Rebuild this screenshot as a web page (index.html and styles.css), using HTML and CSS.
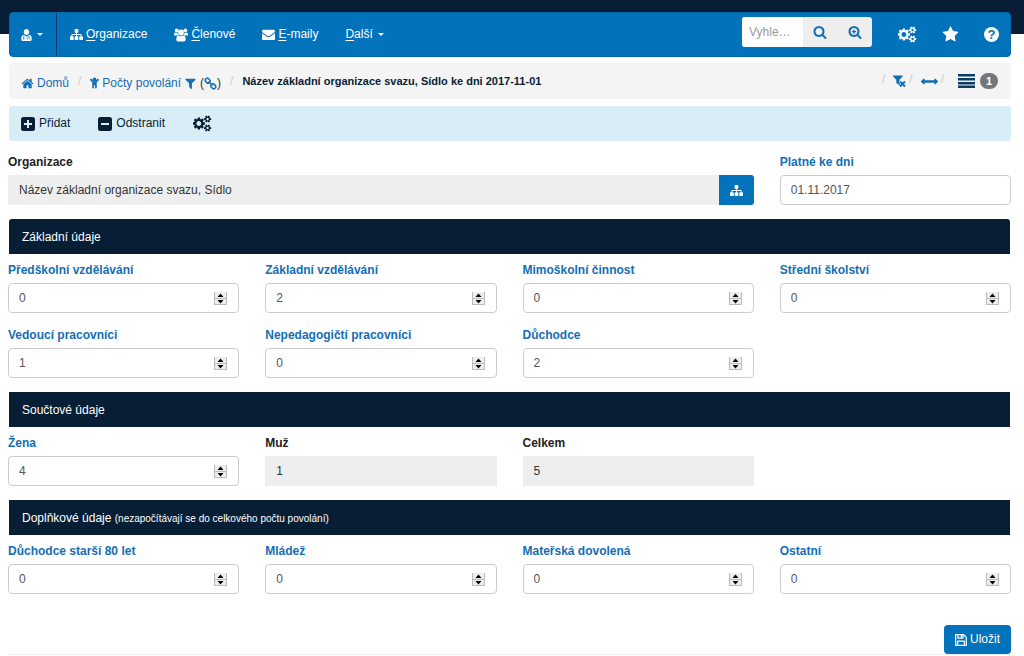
FILE: index.html
```html
<!DOCTYPE html>
<html lang="cs">
<head>
<meta charset="utf-8">
<meta name="viewport" content="width=device-width, initial-scale=1">
<title>Počty povolání</title>
<link rel="stylesheet" href="styles.css">
</head>
<body>
<svg class="sprite" aria-hidden="true">
  <symbol id="i-sitemap" viewBox="0 0 1792 1792"><path d="M1792 1248v320q0 40-28 68t-68 28h-320q-40 0-68-28t-28-68v-320q0-40 28-68t68-28h96v-192h-512v192h96q40 0 68 28t28 68v320q0 40-28 68t-68 28h-320q-40 0-68-28t-28-68v-320q0-40 28-68t68-28h96v-192h-512v192h96q40 0 68 28t28 68v320q0 40-28 68t-68 28h-320q-40 0-68-28t-28-68v-320q0-40 28-68t68-28h96v-192q0-52 38-90t90-38h512v-192h-96q-40 0-68-28t-28-68v-320q0-40 28-68t68-28h320q40 0 68 28t28 68v320q0 40-28 68t-68 28h-96v192h512q52 0 90 38t38 90v192h96q40 0 68 28t28 68z"/></symbol>
  <symbol id="i-home" viewBox="0 0 1792 1792"><path d="M1472 992v480q0 26-19 45t-45 19h-384v-384h-256v384h-384q-26 0-45-19t-19-45v-480q0-1 .5-3t.5-3l575-474 575 474q1 2 1 6zm223-69l-62 74q-8 9-21 11h-3q-13 0-21-7l-692-577-692 577q-12 8-24 7-13-2-21-11l-62-74q-8-10-7-23.500t11-21.500l719-599q32-26 76-26t76 26l244 204v-195q0-14 9-23t23-9h192q14 0 23 9t9 23v408l219 182q10 8 11 21.500t-7 23.500z"/></symbol>
  <symbol id="i-envelope" viewBox="0 0 1792 1792"><path d="M1792 710v794q0 66-47 113t-113 47h-1472q-66 0-113-47t-47-113v-794q44 49 101 87 362 246 497 345 57 42 92.500 65.500t94.500 48 110 24.500h2q51 0 110-24.500t94.500-48 92.500-65.500q170-123 498-345 57-39 100-87zm0-294q0 79-49 151t-122 123q-376 261-468 325-10 7-42.500 31t-54 38.500-52 32.500-57.500 27-50 9h-2q-23 0-50-9t-57.500-27-52-32.500-54-38.500-42.500-31q-91-64-262-182.500t-205-142.500q-62-42-117-115.500t-55-136.500q0-78 41.500-130t118.500-52h1472q65 0 112.500 47t47.500 113z"/></symbol>
  <symbol id="i-search" viewBox="0 0 1792 1792"><path d="M1216 832q0-185-131.500-316.500t-316.500-131.500-316.500 131.500-131.500 316.500 131.500 316.500 316.500 131.500 316.500-131.500 131.500-316.500zm512 832q0 52-38 90t-90 38q-54 0-90-38l-343-342q-179 124-399 124-143 0-273.500-55.500t-225-150-150-225-55.500-273.500 55.500-273.500 150-225 225-150 273.500-55.500 273.500 55.500 225 150 150 225 55.500 273.500q0 220-124 399l343 343q37 37 37 90z"/></symbol>
  <symbol id="i-search-plus" viewBox="0 0 1792 1792"><use href="#i-search"/><path d="M688 560h160v192h192v160h-192v192h-160v-192h-192v-160h192z"/></symbol>
  <symbol id="i-star" viewBox="0 0 1792 1792"><path d="M1728 647q0 22-26 48l-363 354 86 500q1 7 1 20 0 21-10.500 35.500t-30.500 14.500q-19 0-40-12l-449-236-449 236q-22 12-40 12-21 0-31.500-14.500t-10.500-35.500q0-6 2-20l86-500-364-354q-25-27-25-48 0-37 56-46l502-73 225-455q19-41 49-41t49 41l225 455 502 73q56 9 56 46z"/></symbol>
  <symbol id="i-cog-small" viewBox="0 0 768 768" overflow="visible"><path d="M512 384q0-52-38-90t-90-38-90 38-38 90q0 53 37.500 90.500t90.500 37.500 90.500-37.500 37.500-90.500zm256-70v140q0 16-149 31-12 27-30 52 51 113 51 138 0 4-4 7-122 71-124 71-8 0-46-47t-52-68q-20 2-30 2t-30-2q-14 21-52 68t-46 47q-2 0-124-71-4-3-4-7 0-25 51-138-18-25-30-52-149-15-149-31v-140q0-16 149-31 13-29 30-52-51-113-51-138 0-4 4-7 4-2 35-20t59-34 30-16q8 0 46 46.500t52 67.500q20-2 30-2t30 2q51-71 92-112l6-2q4 0 124 70 4 3 4 7 0 25-51 138 17 23 30 52 149 15 149 31z"/></symbol>
  <symbol id="i-cogs" viewBox="0 0 1920 1792"><path d="M832 896q0-106-75-181t-181-75-181 75-75 181 75 181 181 75 181-75 75-181zm384-91v185q0 10-7 19.500t-16 10.500l-155 24q-11 35-32 76 34 48 90 115 7 11 7 20 0 12-7 19-23 30-82.500 89.500t-78.500 59.500q-11 0-21-7l-115-90q-37 19-77 31-11 108-23 155-7 24-30 24h-186q-11 0-20-7.500t-10-17.500l-23-153q-34-10-75-31l-118 89q-7 7-20 7-11 0-21-8-144-133-144-160 0-9 7-19 10-14 41-53t47-61q-23-44-35-82l-152-24q-10-1-17-9.500t-7-19.500v-185q0-10 7-19.500t16-10.500l155-24q11-35 32-76-34-48-90-115-7-11-7-20 0-12 7-20 22-30 82-89t79-59q11 0 21 7l115 90q34-18 77-32 11-108 23-154 7-24 30-24h186q11 0 20 7.500t10 17.500l23 153q34 10 75 31l118-89q8-7 20-7 11 0 21 8 144 133 144 160 0 8-7 19-12 16-42 54t-45 60q23 48 34 82l152 23q10 2 17 10.500t7 19.500z"/><use href="#i-cog-small" x="1110" y="40" width="768" height="768"/><use href="#i-cog-small" x="1110" y="984" width="768" height="768"/></symbol>
  <symbol id="i-filter" viewBox="0 0 1792 1792"><path d="M1595 295q17 41-14 70l-493 493v742q0 42-39 59-13 5-25 5-27 0-45-19l-256-256q-19-19-19-45v-486l-493-493q-31-29-14-70 17-39 59-39h1280q42 0 59 39z"/></symbol>
  <symbol id="i-arrows-h" viewBox="0 0 1792 1792"><path d="M1792 896q0 26-19 45l-256 256q-19 19-45 19t-45-19-19-45v-128h-1024v128q0 26-19 45t-45 19-45-19l-256-256q-19-19-19-45t19-45l256-256q19-19 45-19t45 19 19 45v128h1024v-128q0-26 19-45t45-19 45 19l256 256q19 19 19 45z"/></symbol>
  <symbol id="i-user-md" viewBox="0 0 12 13"><path d="M6 0a3 3.200 0 0 1 2.300 5.300L6 6.800 3.700 5.300A3 3.200 0 0 1 6 0zM3 6.200l3 2.200 3-2.200c2 .4 2.700 2.200 2.700 4.600 0 1.500-.7 2.200-2 2.200H2.300c-1.300 0-2-.7-2-2.200C.3 8.400 1 6.600 3 6.200z"/><path class="cut" d="M3 7v3.200M7 11.600V10.300a1.300 1.300 0 0 1 2.600 0v1.300M8.300 9V7.200"/><circle class="hole" cx="3" cy="10.700" r=".8"/></symbol>
  <symbol id="i-users" viewBox="0 0 14 13"><circle cx="2.700" cy="2" r="1.900"/><circle cx="11.300" cy="2" r="1.900"/><circle cx="7" cy="4" r="2.900"/><path d="M0 6.800C0 5 .5 4 1.100 4q1.400 1 2.700.6Q3.700 6 4.600 7H1.200Q0 7 0 6.800zM14 6.800C14 5 13.500 4 12.900 4q-1.400 1-2.700.6.100 1.400-.8 2.400h3.400q1.200 0 1.200-.2zM4.400 6.900Q7 8.400 9.600 6.900c1.700.2 2.100 2.200 2.100 4.200 0 1.200-.8 1.900-1.900 1.900H4.200c-1.100 0-1.900-.7-1.900-1.900 0-2 .4-4 2.100-4.200z"/></symbol>
  <symbol id="i-child" viewBox="0 0 10 12"><circle cx="5" cy="2.200" r="2.200"/><path d="M.3 1.600a1 1 0 0 1 1.400 0L4 4h2l2.300-2.400a1 1 0 0 1 1.400 1.400L7.500 5.500v5.600a.9.900 0 0 1-1.900 0V8.400H4.400v2.700a.9.900 0 0 1-1.900 0V5.500L.3 3a1 1 0 0 1 0-1.400z"/></symbol>
  <symbol id="i-chain" viewBox="0 0 13 13"><g fill="none" stroke="currentColor" stroke-width="1.500"><rect x="-2.500" y="-2" width="5" height="4" rx="1.800" transform="translate(3.700 3.700) rotate(45)"/><rect x="-2.500" y="-2" width="5" height="4" rx="1.800" transform="translate(9.300 9.300) rotate(45)"/><path d="M4.500 4.500l4 4"/></g></symbol>
  <symbol id="i-plus-square" viewBox="0 0 14 14"><path fill-rule="evenodd" d="M2.500 0h9A2.500 2.500 0 0 1 14 2.500v9a2.500 2.500 0 0 1-2.500 2.500h-9A2.500 2.500 0 0 1 0 11.500v-9A2.500 2.500 0 0 1 2.500 0zM6 3v3H3v2h3v3h2V8h3V6H8V3z"/></symbol>
  <symbol id="i-minus-square" viewBox="0 0 14 14"><path fill-rule="evenodd" d="M2.500 0h9A2.500 2.500 0 0 1 14 2.500v9a2.500 2.500 0 0 1-2.500 2.500h-9A2.500 2.500 0 0 1 0 11.500v-9A2.500 2.500 0 0 1 2.500 0zM3 6v2h8V6z"/></symbol>
  <symbol id="i-filter-off" viewBox="0 0 13 12"><path d="M.5 0h8.800q.7.200.3.900L6.500 4.300v1.500L5.800 7l1.400 1.500-.7 1.300L3.300 7.500V4.300L.1.900Q-.2.200.5 0z"/><path fill="none" stroke="currentColor" stroke-width="2" d="M7 6l5 5M12 6l-5 5"/></symbol>
  <symbol id="i-floppy" viewBox="0 0 12 12"><path fill="none" stroke="currentColor" stroke-width="1.200" stroke-linejoin="round" d="M.7.7h8l2.600 2.600v8H.7zM3 .7v3.500h5V.7M2.700 11V7.200h6.600V11M6.300 1.200v2"/></symbol>
  <symbol id="i-bars" viewBox="0 0 17 14"><path d="M0 0h17v2.500H0zM0 4h17v2.500H0zM0 8h17v2.500H0zM0 11.500h17V14H0z"/></symbol>
</svg>

<header class="page-head">
  <nav class="navbar" aria-label="Hlavní menu">
    <button class="nav-user" type="button" aria-label="Uživatel"><svg class="icon icon-user"><use href="#i-user-md"/></svg><span class="caret"></span></button>
    <div class="nav-links">
      <a href="#"><svg class="icon icon-13"><use href="#i-sitemap"/></svg><span><u>O</u>rganizace</span></a>
      <a href="#"><svg class="icon icon-14"><use href="#i-users"/></svg><span><u>Č</u>lenové</span></a>
      <a href="#"><svg class="icon icon-13"><use href="#i-envelope"/></svg><span><u>E</u>-maily</span></a>
      <a href="#"><span><u>D</u>alší</span><span class="caret"></span></a>
    </div>
    <form class="search">
      <input type="text" placeholder="Vyhle…" aria-label="Vyhledat">
      <button type="button" aria-label="Hledat"><svg class="icon icon-14"><use href="#i-search"/></svg></button>
      <button type="button" aria-label="Rozšířené hledání"><svg class="icon icon-14"><use href="#i-search-plus"/></svg></button>
    </form>
    <div class="nav-tools">
      <a href="#" aria-label="Nastavení"><svg class="icon icon-cogs"><use href="#i-cogs"/></svg></a>
      <a href="#" aria-label="Oblíbené"><svg class="icon icon-17"><use href="#i-star"/></svg></a>
      <a href="#" aria-label="Nápověda"><span class="help">?</span></a>
    </div>
  </nav>
</header>

<main class="content">
  <div class="crumbs">
    <a href="#"><svg class="icon icon-13"><use href="#i-home"/></svg>Domů</a>
    <span class="slash">/</span>
    <span class="crumb-group"><a href="#"><svg class="icon icon-child"><use href="#i-child"/></svg>Počty povolání <svg class="icon icon-13"><use href="#i-filter"/></svg></a><span>(<a href="#" aria-label="Odkaz"><svg class="icon icon-13"><use href="#i-chain"/></svg></a>)</span></span>
    <span class="slash">/</span>
    <h1>Název základní organizace svazu, Sídlo ke dni 2017-11-01</h1>
    <div class="crumb-tools">
      <span class="slash">/</span>
      <a href="#" aria-label="Zrušit filtr"><svg class="icon icon-13"><use href="#i-filter-off"/></svg></a>
      <span class="slash">/</span>
      <a href="#" aria-label="Na šířku"><svg class="icon icon-17"><use href="#i-arrows-h"/></svg></a>
      <span class="slash">/</span>
      <a class="list-link" href="#" aria-label="Seznam"><svg class="icon icon-bars"><use href="#i-bars"/></svg><span class="badge">1</span></a>
    </div>
  </div>

  <div class="toolbar">
    <button type="button"><svg class="icon icon-14"><use href="#i-plus-square"/></svg>Přidat</button>
    <button type="button"><svg class="icon icon-14"><use href="#i-minus-square"/></svg>Odstranit</button>
    <button type="button" aria-label="Nastavení"><svg class="icon icon-cogs"><use href="#i-cogs"/></svg></button>
  </div>

  <form class="panel">
    <div class="fields">
      <div class="field wide"><label class="plain" for="org">Organizace</label>
        <div class="group"><input id="org" type="text" readonly value="Název základní organizace svazu, Sídlo"><button type="button" aria-label="Vybrat organizaci"><svg class="icon icon-13"><use href="#i-sitemap"/></svg></button></div></div>
      <div class="field"><label for="platne">Platné ke dni</label><input id="platne" type="text" value="01.11.2017"></div>
    </div>

    <h2 class="first">Základní údaje</h2>
    <div class="fields">
      <div class="field"><label for="f1">Předškolní vzdělávání</label><input id="f1" type="number" value="0"></div>
      <div class="field"><label for="f2">Základní vzdělávání</label><input id="f2" type="number" value="2"></div>
      <div class="field"><label for="f3">Mimoškolní činnost</label><input id="f3" type="number" value="0"></div>
      <div class="field"><label for="f4">Střední školství</label><input id="f4" type="number" value="0"></div>
      <div class="field"><label for="f5">Vedoucí pracovníci</label><input id="f5" type="number" value="1"></div>
      <div class="field"><label for="f6">Nepedagogičtí pracovníci</label><input id="f6" type="number" value="0"></div>
      <div class="field"><label for="f7">Důchodce</label><input id="f7" type="number" value="2"></div>
    </div>

    <h2>Součtové údaje</h2>
    <div class="fields">
      <div class="field"><label for="f8">Žena</label><input id="f8" type="number" value="4"></div>
      <div class="field"><label class="plain" for="f9">Muž</label><input id="f9" type="text" readonly value="1"></div>
      <div class="field"><label class="plain" for="f10">Celkem</label><input id="f10" type="text" readonly value="5"></div>
    </div>

    <h2>Doplňkové údaje <small>(nezapočítávají se do celkového počtu povolání)</small></h2>
    <div class="fields">
      <div class="field"><label for="f11">Důchodce starší 80 let</label><input id="f11" type="number" value="0"></div>
      <div class="field"><label for="f12">Mládež</label><input id="f12" type="number" value="0"></div>
      <div class="field"><label for="f13">Mateřská dovolená</label><input id="f13" type="number" value="0"></div>
      <div class="field"><label for="f14">Ostatní</label><input id="f14" type="number" value="0"></div>
    </div>

    <div class="actions"><button type="submit"><svg class="icon icon-12"><use href="#i-floppy"/></svg>Uložit</button></div>
  </form>
</main>
</body>
</html>
```
FILE: styles.css
```css
:root {
  --blue: #0272bb;
  --link: #146eb4;
  --navy: #081e35;
}

* { box-sizing: border-box; }

body {
  margin: 0;
  background: #fff;
  color: #333;
  font: 12px/17px "Liberation Sans", Arial, sans-serif;
}

button, input { font: inherit; margin: 0; }
button { border: 0; background: none; padding: 0; color: inherit; cursor: pointer; }
a { color: var(--link); text-decoration: none; }

.sprite { display: none; }
.icon { display: inline-block; flex: none; width: 14px; height: 14px; fill: currentColor; }
.icon-12 { width: 12px; height: 12px; }
.icon-13 { width: 13px; height: 13px; }
.icon-17 { width: 17px; height: 17px; }
.icon-user { width: 11px; height: 12px; }
.icon-child { width: 9px; height: 12px; }
.icon-cogs { width: 19px; height: 17px; }
.icon-bars { width: 17px; height: 14px; color: #0b3c66; }
.cut { fill: none; stroke: var(--blue); stroke-width: 0.7; }
.hole { fill: var(--blue); }

.caret {
  width: 0;
  height: 0;
  border: 3px solid transparent;
  border-top-color: currentColor;
  border-bottom: 0;
}

/* Top navigation over the dark band */
.page-head {
  padding: 12px 13px 6px 9px;
  background: linear-gradient(var(--navy) 34px, #fff 34px);
}
.navbar {
  display: flex;
  align-items: stretch;
  height: 45px;
  border: 1px solid #0967a7;
  border-radius: 4px;
  background: var(--blue);
  color: #fff;
}
.navbar a { color: #fff; }
.nav-user {
  display: flex;
  align-items: center;
  gap: 5px;
  padding: 0 13px 0 11px;
  border-right: 1px solid #07406c;
}
.nav-links { display: flex; flex: 1; gap: 27px; padding-left: 13px; }
.nav-links a { display: flex; align-items: center; gap: 3px; }
.nav-links u { text-underline-offset: 2px; }
.nav-links a > .caret { margin-left: 2px; }

.search {
  display: flex;
  align-self: flex-start;
  width: 130px;
  height: 30px;
  margin: 4px 26px 0 0;
  border-radius: 3px;
  overflow: hidden;
  background: #eee;
  color: var(--link);
}
.search input { width: 61px; padding: 0 7px; border: 0; background: #fff; }
.search input::placeholder { color: #999; opacity: 1; }
.search button { display: flex; flex: 1; align-items: center; justify-content: center; }

.nav-tools { display: flex; align-items: center; gap: 25px; padding-right: 11px; }
.nav-tools a { display: flex; }
.help {
  width: 15px;
  height: 15px;
  border-radius: 50%;
  background: #fff;
  color: var(--blue);
  font-size: 13px;
  font-weight: bold;
  line-height: 15px;
  text-align: center;
}

.content { padding: 0 13px 0 8px; }

.crumbs {
  display: flex;
  align-items: center;
  height: 36px;
  margin: 0 0 7px 1px;
  padding: 0 13px 0 12px;
  border-radius: 4px;
  background: #f4f4f4;
}
.crumbs a { display: inline-flex; align-items: center; gap: 3px; }
.crumbs > a, .crumb-group { padding-top: 4px; }
.crumb-group { display: inline-flex; align-items: center; gap: 3px; }
.crumb-group > span { display: inline-flex; align-items: center; }
.slash { padding: 0 9px; color: #ccc; }
.crumbs h1 {
  margin: 0;
  color: var(--navy);
  font-size: 11px;
  line-height: 17px;
}
.crumb-tools { display: flex; align-items: center; margin-left: auto; }
.crumb-tools .slash { padding: 0 8px 4px 3px; }
.crumb-tools .list-link { gap: 5px; padding-left: 6px; }
.badge {
  width: 18px;
  border-radius: 8px;
  background: #777;
  color: #fff;
  font-size: 11px;
  font-weight: bold;
  line-height: 16px;
  text-align: center;
}

.toolbar {
  display: flex;
  align-items: center;
  gap: 28px;
  height: 35px;
  margin: 0 0 12px 1px;
  padding: 0 12px;
  border-radius: 3px;
  background: #d9edf7;
  color: var(--navy);
}
.toolbar button { display: flex; align-items: center; gap: 4px; }

/* Form */
.panel { border-bottom: 1px solid #eee; }
.fields { display: grid; grid-template-columns: repeat(4, 1fr); gap: 13px 26px; }
.field { min-width: 0; }
.wide { grid-column: span 3; }
label { display: block; margin-bottom: 3px; color: var(--link); font-weight: bold; line-height: 19px; }
label.plain { color: #222; }

.field input {
  display: block;
  width: 100%;
  height: 30px;
  padding: 0 10px;
  border: 1px solid #ccc;
  border-radius: 4px;
  background: #fff;
  color: #555;
}
.field input[readonly] { border-color: #eee; border-radius: 0; background: #eee; color: #333; }
.field input[type="number"] {
  appearance: textfield;
  background: #fff url("data:image/svg+xml,%3Csvg xmlns='http://www.w3.org/2000/svg' width='13' height='13'%3E%3Cpath fill='%23eee' d='M0 0h13v13H0z'/%3E%3Cpath fill='none' stroke='%23bbb' d='M.5 0v13M12.500 0v12.500H0M0 6.500h13'/%3E%3Cpath d='M3.500 5l3-3.500 3 3.500zM3.500 8l3 3.500 3-3.500z'/%3E%3C/svg%3E") no-repeat right 11px center;
}
.field input::-webkit-inner-spin-button { display: none; }

.group { display: flex; }
.group input { flex: 1; }
.group button {
  display: flex;
  align-items: center;
  justify-content: center;
  width: 35px;
  border-radius: 0 3px 3px 0;
  background: var(--blue);
  color: #fff;
}

h2 {
  margin: 14px 1px 7px;
  padding: 10px 13px 8px;
  background: var(--navy);
  color: #fff;
  font-size: 12px;
  font-weight: normal;
  line-height: 17px;
}
h2.first { border-radius: 3px 3px 0 0; }
h2 small { font-size: 10px; }

.actions { display: flex; justify-content: flex-end; padding-top: 31px; }
.actions button {
  display: flex;
  align-items: center;
  gap: 3px;
  height: 29px;
  padding: 0 11px;
  border-radius: 4px;
  background: var(--blue);
  color: #fff;
}
```
